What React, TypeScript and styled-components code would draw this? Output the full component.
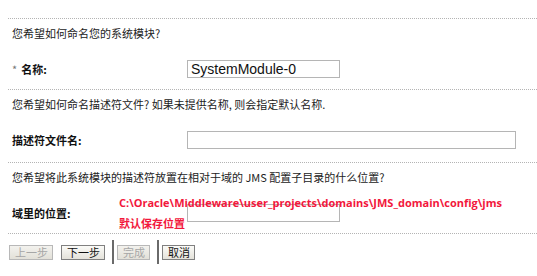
import React from 'react';
import styled, { createGlobalStyle } from 'styled-components';

const GlobalStyle = createGlobalStyle`
    html, body {
        margin: 0;
        padding: 0;
        background: #ffffff;
    }
    body {
        font-family: "Noto Sans CJK SC", "DejaVu Sans", sans-serif;
        color: #1a1a1a;
    }
`;

const Page = styled.div`
    width: 529px;
    margin-left: 8px;
    padding-top: 18px;
`;

const Section = styled.div<{ $bottom: number }>`
    border-top: 1px dotted #b4b4b4;
    padding: 7px 0 ${(p) => p.$bottom}px 4px;
`;

const Question = styled.div`
    font-size: 11px;
    line-height: 14px;
    height: 14px;
    white-space: nowrap;
    color: #222;
`;

const FieldRow = styled.div`
    position: relative;
    display: grid;
    grid-template-columns: 175px 1fr;
    align-items: center;
    margin-top: 20px;
    height: 18px;
`;

const Label = styled.label`
    font-size: 11px;
    font-weight: bold;
    line-height: 14px;
    color: #111;
    white-space: nowrap;
`;

const Required = styled.span`
    color: #777;
    font-weight: normal;
    margin-right: 4px;
`;

const TextInput = styled.input<{ $width: number }>`
    box-sizing: border-box;
    width: ${(p) => p.$width}px;
    height: 18px;
    border: 1px solid #b5b5b5;
    padding: 0 3px;
    margin: 0;
    font-family: "Liberation Sans", Arial, sans-serif;
    font-size: 14px;
    color: #111;
    background: #fff;
    outline: none;
`;

const Note = styled.div`
    position: absolute;
    left: 107px;
    top: -12px;
    color: #f2173c;
    font-weight: bold;
    pointer-events: none;
`;

const NotePath = styled.div`
    font-family: "Open Sans", "Noto Sans", sans-serif;
    font-size: 11px;
    line-height: 21px;
    white-space: nowrap;
`;

const NoteText = styled.div`
    font-family: "Noto Sans CJK SC", sans-serif;
    font-size: 11px;
    line-height: 20px;
`;

const ButtonBar = styled.div`
    display: flex;
    align-items: center;
    border-top: 1px dotted #b4b4b4;
    padding: 6px 0 0 1px;
    height: 24px;
`;

const Button = styled.button`
    box-sizing: border-box;
    height: 15px;
    padding: 0 4px 0 5px;
    margin: 0;
    font-family: "Noto Sans CJK SC", sans-serif;
    font-size: 11px;
    line-height: 13px;
    color: #111;
    background: linear-gradient(#fbfbf8, #e4e2da);
    border: 1px solid #808080;
    border-radius: 0;

    &:disabled {
        color: #a6a6a6;
        border-color: #b8b8b8;
        background: linear-gradient(#f3f2ee, #e2e0d8);
    }
`;

const Separator = styled.span`
    display: block;
    width: 2px;
    height: 24px;
    background: #6a6a6a;
    margin: 0 3px 0 7px;
`;

const ButtonGap = styled.span`
    display: block;
    width: 8px;
`;

export default function App() {
    return (
        <>
            <GlobalStyle />
            <Page>
                <Section $bottom={11}>
                    <Question>您希望如何命名您的系统模块?</Question>
                    <FieldRow>
                        <Label>
                            <Required>*</Required>名称:
                        </Label>
                        <TextInput $width={153} defaultValue="SystemModule-0" />
                    </FieldRow>
                </Section>
                <Section $bottom={13}>
                    <Question>您希望如何命名描述符文件? 如果未提供名称, 则会指定默认名称.</Question>
                    <FieldRow>
                        <Label>描述符文件名:</Label>
                        <TextInput $width={329} defaultValue="" />
                    </FieldRow>
                </Section>
                <Section $bottom={11}>
                    <Question>您希望将此系统模块的描述符放置在相对于域的 JMS 配置子目录的什么位置?</Question>
                    <FieldRow>
                        <Label>域里的位置:</Label>
                        <TextInput $width={153} defaultValue="" />
                        <Note>
                            <NotePath>C:\Oracle\Middleware\user_projects\domains\JMS_domain\config\jms</NotePath>
                            <NoteText>默认保存位置</NoteText>
                        </Note>
                    </FieldRow>
                </Section>
                <ButtonBar>
                    <Button disabled>上一步</Button>
                    <ButtonGap />
                    <Button>下一步</Button>
                    <Separator />
                    <Button disabled>完成</Button>
                    <Separator />
                    <Button>取消</Button>
                </ButtonBar>
            </Page>
        </>
    );
}
